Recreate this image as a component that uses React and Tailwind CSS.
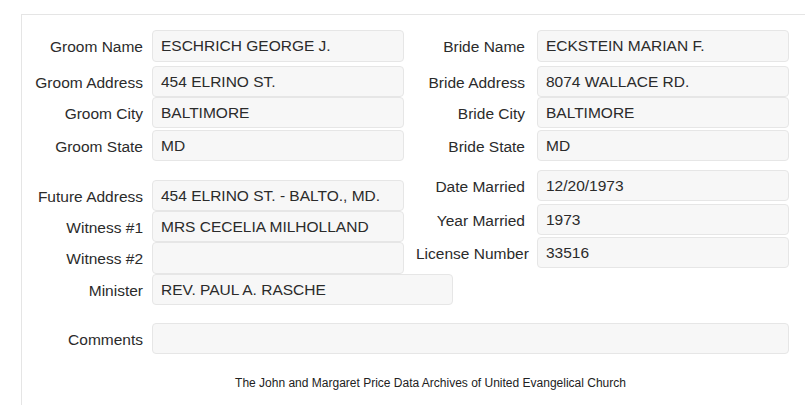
import React from 'react';

const Field = ({ label, value, labelW, gap, inputW, h, mt }) => (
    <div className={`flex items-center ${mt}`}>
        <div className={`${labelW} pt-[2px] text-right whitespace-nowrap`}>{label}</div>
        <div className={`${gap} ${inputW} ${h} flex items-center px-[8px] bg-[#f7f7f7] border border-[#e6e6e6] rounded-[4px] whitespace-nowrap`}>
            {value}
        </div>
    </div>
);

const L = (props) => <Field labelW="w-[111px]" gap="ml-[9px]" inputW="w-[252px]" {...props} />;
const R = (props) => <Field labelW="w-[109px]" gap="ml-[12px]" inputW="w-[252px]" {...props} />;

const App = () => {
    return (
        <div className="w-[805px] h-[405px] bg-white overflow-hidden text-[#2b2b2b] text-[15.5px] font-['Liberation_Sans',Arial,sans-serif]">
            <div className="ml-[21px] mt-[14px] w-[900px] h-[400px] border-l border-t border-[#e5e5e5] pl-[10px] pt-[15px]">
                {/* Groom / Bride */}
                <div className="flex">
                    <div className="w-[372px]">
                        <L label="Groom Name" value="ESCHRICH GEORGE J." h="h-[32px]" mt="mt-0" />
                        <L label="Groom Address" value="454 ELRINO ST." h="h-[31px]" mt="mt-[4px]" />
                        <L label="Groom City" value="BALTIMORE" h="h-[31px]" mt="mt-0" />
                        <L label="Groom State" value="MD" h="h-[31px]" mt="mt-[2px]" />
                    </div>
                    <div className="ml-[12px]">
                        <R label="Bride Name" value="ECKSTEIN MARIAN F." h="h-[32px]" mt="mt-0" />
                        <R label="Bride Address" value="8074 WALLACE RD." h="h-[31px]" mt="mt-[4px]" />
                        <R label="Bride City" value="BALTIMORE" h="h-[31px]" mt="mt-0" />
                        <R label="Bride State" value="MD" h="h-[31px]" mt="mt-[2px]" />
                    </div>
                </div>

                {/* Marriage details */}
                <div className="flex mt-[9px]">
                    <div className="w-[372px] pt-[10px]">
                        <L label="Future Address" value="454 ELRINO ST. - BALTO., MD." h="h-[31px]" mt="mt-0" />
                        <L label="Witness #1" value="MRS CECELIA MILHOLLAND" h="h-[31px]" mt="mt-0" />
                        <L label="Witness #2" value="" h="h-[32px]" mt="mt-0" />
                    </div>
                    <div className="ml-[12px]">
                        <R label="Date Married" value="12/20/1973" h="h-[31px]" mt="mt-0" />
                        <R label="Year Married" value="1973" h="h-[31px]" mt="mt-[3px]" />
                        <R label="License Number" value="33516" h="h-[31px]" mt="mt-[2px]" />
                    </div>
                </div>
                <Field label="Minister" value="REV. PAUL A. RASCHE" labelW="w-[111px]" gap="ml-[9px]" inputW="w-[301px]" h="h-[31px]" mt="mt-0" />

                <Field label="Comments" value="" labelW="w-[111px]" gap="ml-[9px]" inputW="w-[637px]" h="h-[31px]" mt="mt-[18px]" />

                <div className="w-[797px] mt-[22px] text-center text-[12px] leading-[14px] text-[#222]">
                    The John and Margaret Price Data Archives of United Evangelical Church
                </div>
            </div>
        </div>
    );
};

export default App;
